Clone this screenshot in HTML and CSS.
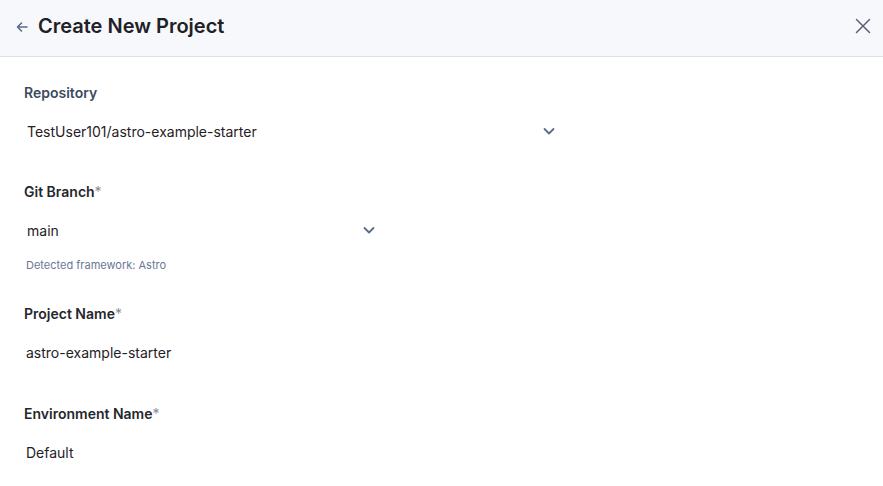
FILE: index.html
```html
<!DOCTYPE html>
<html>
<head>
<meta charset="utf-8">
<link rel="stylesheet" href="styles.css">
</head>
<body>
<header class="header">
  <div class="header-left">
    <svg class="back" width="14" height="14" viewBox="0 0 14 14"><path d="M12 7H2.5M6.5 3L2.5 7l4 4" fill="none" stroke="#5b6b8c" stroke-width="1.6" stroke-linecap="round" stroke-linejoin="round"/></svg>
    <h1 class="title">Create New Project</h1>
  </div>
  <svg class="close" width="16" height="16" viewBox="0 0 16 16"><path d="M1.5 1.5l13 13M14.5 1.5l-13 13" stroke="#5a6270" stroke-width="1.5" stroke-linecap="round"/></svg>
</header>
<main class="form">
  <div class="group">
    <div class="label label-muted">Repository</div>
    <div class="field select select-wide">
      <span>TestUser101/astro-example-starter</span>
      <svg class="chev" width="14" height="14" viewBox="0 0 14 14"><path d="M2.5 5l4.5 4.5L11.5 5" fill="none" stroke="#5b6b8c" stroke-width="1.8" stroke-linecap="round" stroke-linejoin="round"/></svg>
    </div>
  </div>
  <div class="group">
    <div class="label">Git Branch<span class="req">*</span></div>
    <div class="field select select-narrow">
      <span>main</span>
      <svg class="chev" width="14" height="14" viewBox="0 0 14 14"><path d="M2.5 5l4.5 4.5L11.5 5" fill="none" stroke="#5b6b8c" stroke-width="1.8" stroke-linecap="round" stroke-linejoin="round"/></svg>
    </div>
    <div class="helper">Detected framework: Astro</div>
  </div>
  <div class="group group-wide">
    <div class="label">Project Name<span class="req">*</span></div>
    <div class="field input">astro-example-starter</div>
  </div>
  <div class="group">
    <div class="label">Environment Name<span class="req">*</span></div>
    <div class="field input">Default</div>
  </div>
</main>
</body>
</html>
```
FILE: styles.css
```css
* { box-sizing: border-box; }
html, body { margin: 0; padding: 0; background: #ffffff; }
body { font-family: Inter, "Noto Sans", sans-serif; color: #222429; }
.header {
  height: 57px;
  background: #f7f8fc;
  border-bottom: 1px solid #dde1ea;
  display: flex;
  align-items: center;
  justify-content: space-between;
  padding: 0 12px 4px 15px;
}
.header-left { display: flex; align-items: center; gap: 9px; }
.back { display: block; margin-top: 1px; }
.title { margin: 0; font-size: 20px; font-weight: 600; color: #1f2126; letter-spacing: 0; }
.close { display: block; margin-top: 0; }
.form { padding: 26px 24px 0 24px; display: flex; flex-direction: column; }
.group { display: flex; flex-direction: column; margin-bottom: 31px; }
.group-wide { margin-bottom: 32px; }
.label { font-size: 14px; line-height: 20px; font-weight: 600; color: #25272c; margin-bottom: 8px; }
.label-muted { color: #3d4a5e; }
.req { color: #8a8d94; font-weight: 400; }
.field { height: 40px; display: flex; align-items: center; font-size: 14px; color: #1f2126; padding-left: 3px; }
.input { padding-left: 2px; }
.select { justify-content: space-between; padding-right: 0; }
.select-wide { width: 532px; }
.select-narrow { width: 352px; }
.chev { display: block; }
.helper { font-size: 11px; line-height: 16px; color: #6a7896; margin-top: 7px; padding-left: 2px; }
```
